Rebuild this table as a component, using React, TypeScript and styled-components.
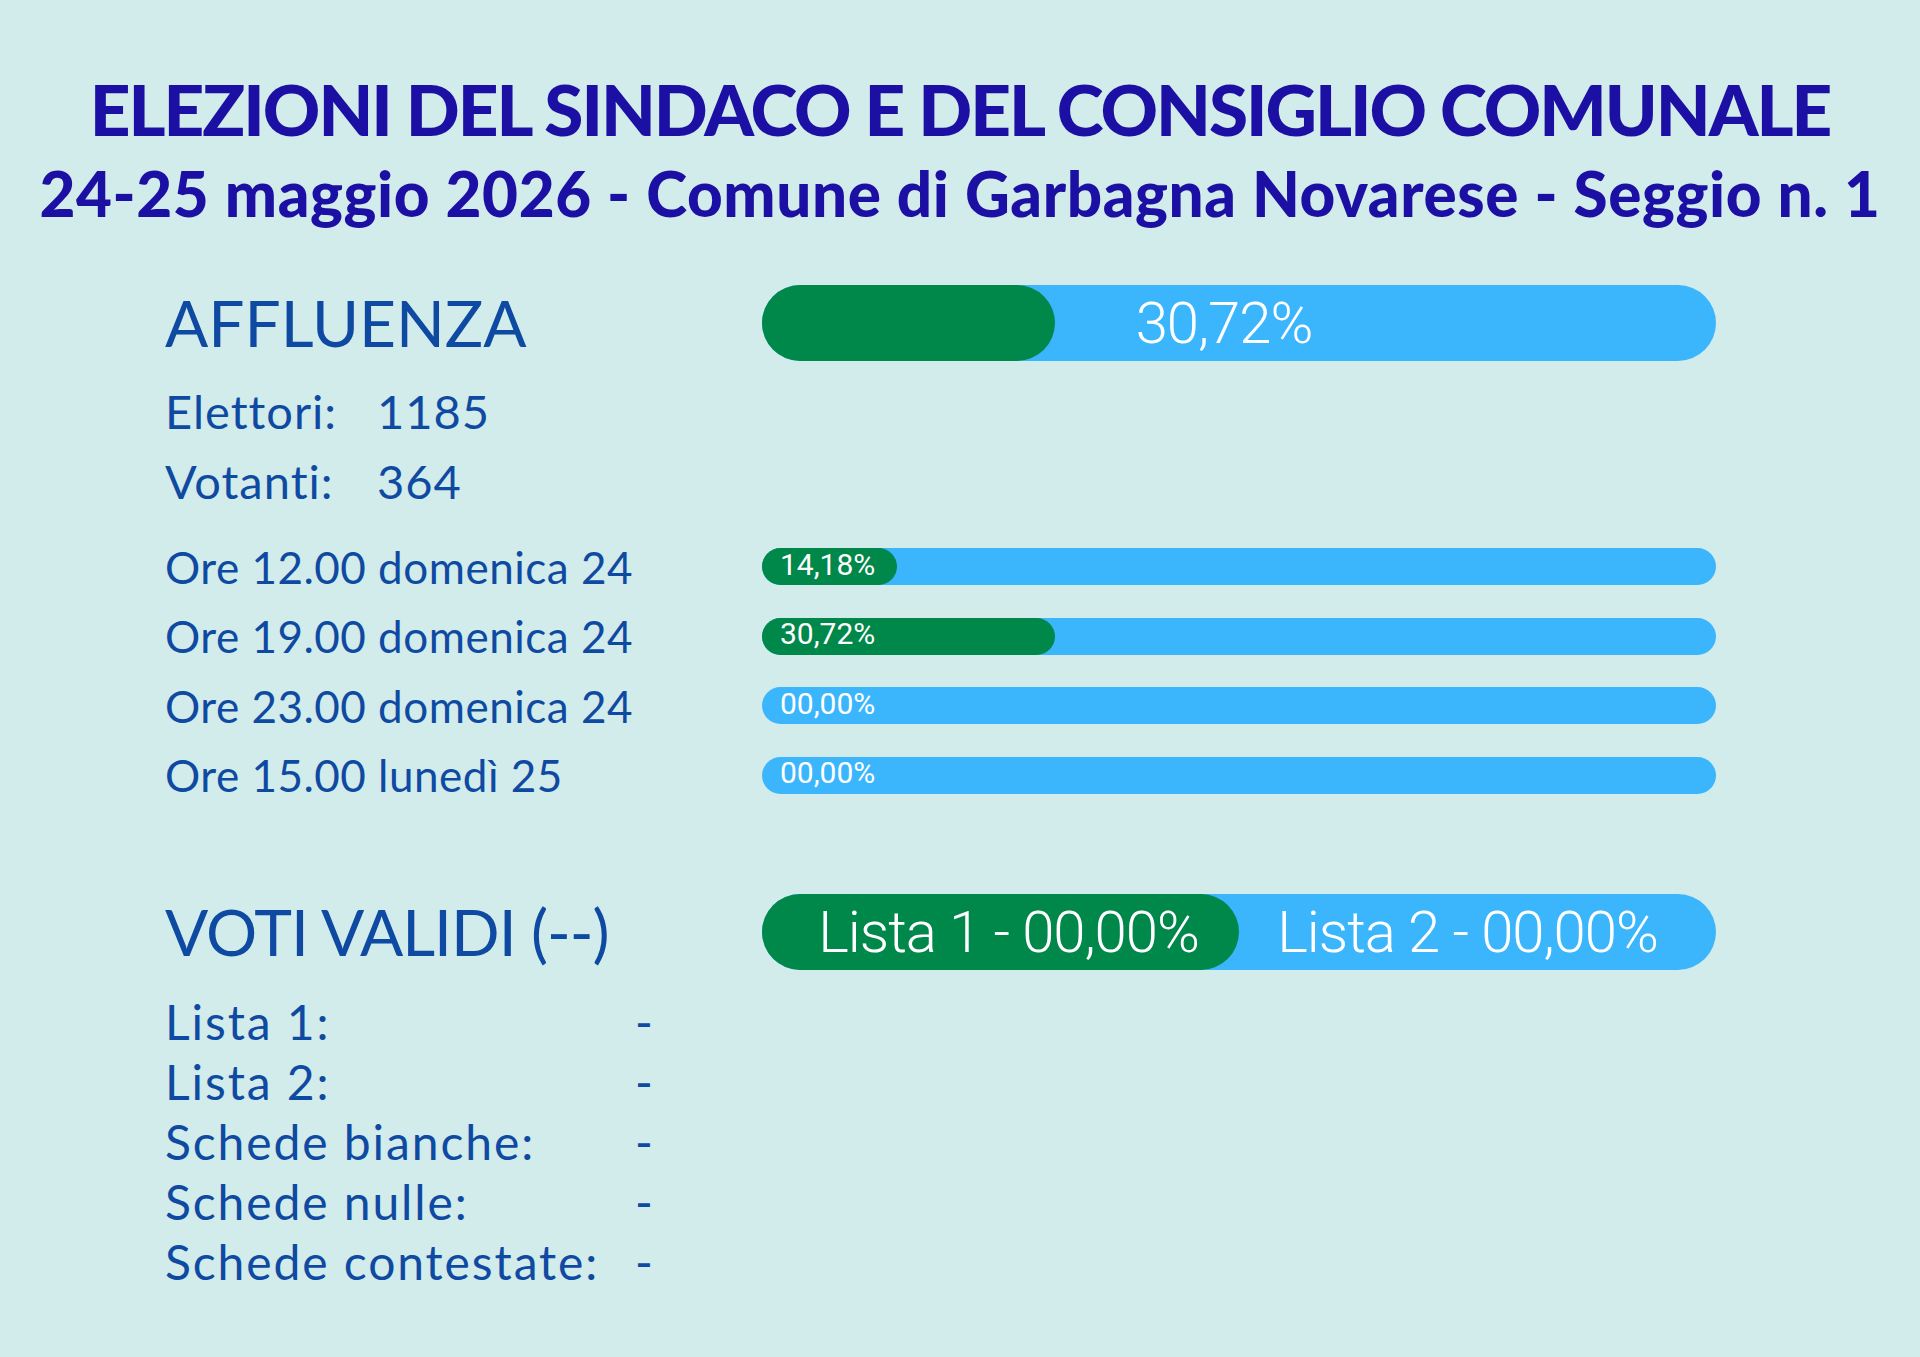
import React from "react";
import styled, { createGlobalStyle } from "styled-components";

const GlobalStyle = createGlobalStyle`
  html, body {
    margin: 0;
    padding: 0;
    background: #d2ebeb;
  }
  * { box-sizing: border-box; }
`;

const Page = styled.div`
  width: 1920px;
  height: 1357px;
  background: #d2ebeb;
  padding-top: 69px;
  font-family: "Lato", "Liberation Sans", sans-serif;
  color: #0f4aa2;
  overflow: hidden;
`;

const Header = styled.header`
  display: flex;
  flex-direction: column;
  align-items: center;
  color: #1c0fa3;
  font-family: "Lato", "Liberation Sans", sans-serif;
  font-weight: 900;
`;

const Title = styled.h1`
  margin: 0;
  font-size: 71px;
  line-height: 80px;
  font-weight: 900;
  letter-spacing: -2px;
  white-space: nowrap;
`;

const Subtitle = styled.h2`
  margin: 4px 0 0;
  font-size: 62px;
  line-height: 80px;
  font-weight: 900;
  letter-spacing: 0.6px;
  white-space: nowrap;
`;

const Board = styled.section`
  display: grid;
  grid-template-columns: 597px 954px;
  padding-left: 165px;
  margin-top: 52px;
`;

const Row = styled.div<{ $h: number; $mt?: number }>`
  grid-column: 1 / -1;
  display: grid;
  grid-template-columns: 597px 954px;
  align-items: center;
  height: ${(p) => p.$h}px;
  margin-top: ${(p) => p.$mt ?? 0}px;
`;

const SectionTitle = styled.div<{ $ls?: number }>`
  font-size: 64px;
  font-weight: 400;
  line-height: 1;
  letter-spacing: ${(p) => p.$ls ?? 0}px;
  white-space: nowrap;
`;

const Stat = styled.div`
  display: flex;
  font-size: 47px;
  line-height: 1;
  letter-spacing: 1px;
`;

const StatLabel = styled.span<{ $w: number }>`
  width: ${(p) => p.$w}px;
  flex: none;
`;

const RowLabel = styled.div`
  font-size: 44px;
  line-height: 1;
  letter-spacing: 0.5px;
  white-space: nowrap;
`;

const Track = styled.div<{ $h: number }>`
  position: relative;
  height: ${(p) => p.$h}px;
  border-radius: ${(p) => p.$h / 2}px;
  background: #3bb6fd;
  display: flex;
  align-items: center;
`;

const Fill = styled.div`
  position: absolute;
  left: 0;
  top: 0;
  bottom: 0;
  background: #00874a;
  border-radius: 999px;
`;

const BigValue = styled.span`
  position: relative;
  width: 100%;
  text-align: center;
  font-family: "Roboto", "Liberation Sans", sans-serif;
  font-weight: 300;
  font-size: 58px;
  color: #ffffff;
  letter-spacing: -1px;
  padding-right: 30px;
`;

const SmallValue = styled.span`
  position: relative;
  padding-left: 18px;
  margin-top: -4px;
  font-family: "Roboto", "Liberation Sans", sans-serif;
  font-weight: 400;
  font-size: 30px;
  line-height: 1;
  color: #ffffff;
`;

const SplitTrack = styled(Track)`
  display: grid;
  grid-template-columns: 1fr 1fr;
`;

const SplitHalf = styled.span<{ $shift: number }>`
  position: relative;
  text-align: center;
  font-family: "Roboto", "Liberation Sans", sans-serif;
  font-weight: 300;
  font-size: 58px;
  color: #ffffff;
  letter-spacing: -1px;
  padding-left: ${(p) => Math.max(p.$shift, 0)}px;
  padding-right: ${(p) => Math.max(-p.$shift, 0)}px;
`;

const ResultList = styled.div`
  grid-column: 1 / -1;
  display: flex;
  flex-direction: column;
  margin-top: 22px;
`;

const ResultRow = styled.div`
  display: flex;
  align-items: center;
  height: 60px;
  font-size: 48px;
  line-height: 1;
  letter-spacing: 1.9px;
`;

const ResultLabel = styled.span`
  width: 470px;
  flex: none;
  white-space: nowrap;
`;

const hours = [
  { label: "Ore 12.00 domenica 24", value: 14.18 },
  { label: "Ore 19.00 domenica 24", value: 30.72 },
  { label: "Ore 23.00 domenica 24", value: 0 },
  { label: "Ore 15.00 lunedì 25", value: 0 },
];

const results = [
  "Lista 1:",
  "Lista 2:",
  "Schede bianche:",
  "Schede nulle:",
  "Schede contestate:",
];

const fmt = (n: number) =>
  n.toFixed(2).replace(".", ",").padStart(5, "0") + "%";

export default function App() {
  const turnout = 30.72;
  return (
    <>
      <GlobalStyle />
      <Page>
        <Header>
          <Title>ELEZIONI DEL SINDACO E DEL CONSIGLIO COMUNALE</Title>
          <Subtitle>
            24-25 maggio 2026 - Comune di Garbagna Novarese - Seggio n. 1
          </Subtitle>
        </Header>

        <Board>
          <Row $h={76}>
            <SectionTitle>AFFLUENZA</SectionTitle>
            <Track $h={76}>
              <Fill style={{ width: `${turnout}%` }} />
              <BigValue>{fmt(turnout)}</BigValue>
            </Track>
          </Row>

          <Row $h={70} $mt={15}>
            <Stat>
              <StatLabel $w={212}>Elettori:</StatLabel>
              <span>1185</span>
            </Stat>
          </Row>
          <Row $h={70}>
            <Stat>
              <StatLabel $w={212}>Votanti:</StatLabel>
              <span>364</span>
            </Stat>
          </Row>

          {hours.map((h, i) => (
            <Row key={h.label} $h={69.5} $mt={i === 0 ? 16 : 0}>
              <RowLabel>{h.label}</RowLabel>
              <Track $h={37}>
                {h.value > 0 && <Fill style={{ width: `${h.value}%` }} />}
                <SmallValue>{fmt(h.value)}</SmallValue>
              </Track>
            </Row>
          ))}

          <Row $h={76} $mt={84}>
            <SectionTitle $ls={-1}>VOTI VALIDI (--)</SectionTitle>
            <SplitTrack $h={76}>
              <Fill style={{ width: "50%" }} />
              <SplitHalf $shift={16}>Lista 1 - 00,00%</SplitHalf>
              <SplitHalf $shift={-20}>Lista 2 - 00,00%</SplitHalf>
            </SplitTrack>
          </Row>

          <ResultList>
            {results.map((r) => (
              <ResultRow key={r}>
                <ResultLabel>{r}</ResultLabel>
                <span>-</span>
              </ResultRow>
            ))}
          </ResultList>
        </Board>
      </Page>
    </>
  );
}
